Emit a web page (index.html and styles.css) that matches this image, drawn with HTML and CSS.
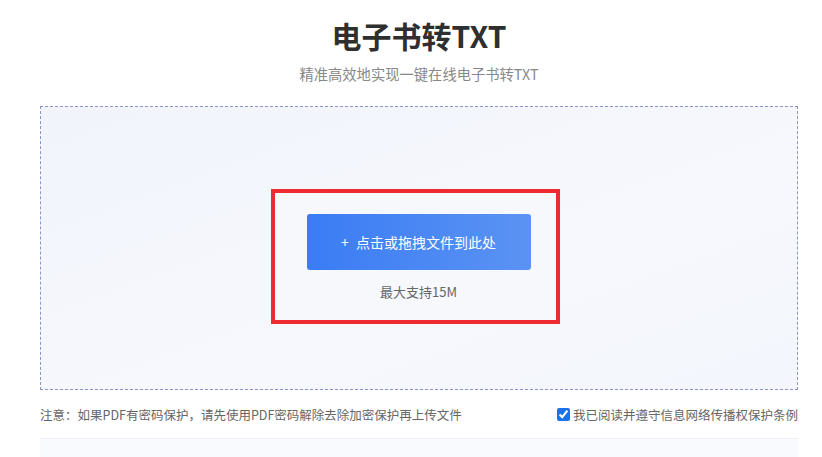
FILE: index.html
```html
<!DOCTYPE html>
<html lang="zh-CN">
<head>
  <meta charset="UTF-8">
  <title>电子书转TXT</title>
  <link rel="stylesheet" href="styles.css">
</head>
<body>
  <div class="page">
    <h1 class="title">电子书转TXT</h1>
    <p class="subtitle">精准高效地实现一键在线电子书转TXT</p>

    <div class="upload-box">
      <div class="highlight">
        <button class="upload-btn"><span class="plus">+</span>点击或拖拽文件到此处</button>
        <div class="tip">最大支持15M</div>
      </div>
    </div>

    <div class="notes">
      <span class="note">注意：如果PDF有密码保护，请先使用PDF密码解除去除加密保护再上传文件</span>
      <label class="agree"><input type="checkbox" checked> 我已阅读并遵守信息网络传播权保护条例</label>
    </div>
  </div>
  <div class="bottom"></div>
</body>
</html>
```

FILE: styles.css
```css
body {
  margin: 0;
  font-family: "Noto Sans CJK SC", "Noto Sans", sans-serif;
  background: #fff;
  color: #333;
}
.page {
  width: 758px;
  margin-left: 40px;
}
.title {
  margin: 0;
  padding-top: 13px;
  height: 44px;
  line-height: 44px;
  font-size: 30px;
  font-weight: bold;
  text-align: center;
  color: #2f2f2f;
}
.subtitle {
  margin: 0;
  padding-top: 7px;
  height: 20px;
  line-height: 20px;
  font-size: 14.3px;
  color: #888;
  text-align: center;
}
.upload-box {
  margin-top: 22px;
  height: 284px;
  box-sizing: border-box;
  border: 1px dashed #8c95c4;
  background: linear-gradient(160deg, #f1f4fb 0%, #f6f8fd 60%, #f3f6fc 100%);
  display: flex;
  flex-direction: column;
  align-items: center;
  padding-top: 82px;
}
.highlight {
  width: 289px;
  height: 135px;
  box-sizing: border-box;
  border: 4px solid #ee2b30;
  margin-left: -8px;
  display: flex;
  flex-direction: column;
  align-items: center;
  padding-top: 21px;
  padding-left: 7px;
  background: #f7f8fc;
}
.upload-btn {
  width: 224px;
  height: 56px;
  border: none;
  border-radius: 3px;
  background: linear-gradient(90deg, #3a7cf4 0%, #5b93f3 100%);
  color: #fff;
  font-family: inherit;
  font-size: 14px;
  cursor: pointer;
}
.plus {
  margin-right: 7px;
}
.tip {
  margin-top: 13px;
  font-size: 13px;
  line-height: 18px;
  color: #666;
}
.notes {
  display: flex;
  justify-content: space-between;
  align-items: center;
  height: 48px;
  border-bottom: 1px solid #eef0f4;
  font-size: 12.5px;
  color: #666;
}
.agree {
  display: flex;
  align-items: center;
  font-size: 12.5px;
  color: #666;
}
.agree input {
  margin: 0 3px 0 0;
  width: 13px;
  height: 13px;
  accent-color: #1a73e8;
}
.bottom {
  height: 40px;
  margin: 0 24px 0 40px;
  background: #f8fafd;
}
```
